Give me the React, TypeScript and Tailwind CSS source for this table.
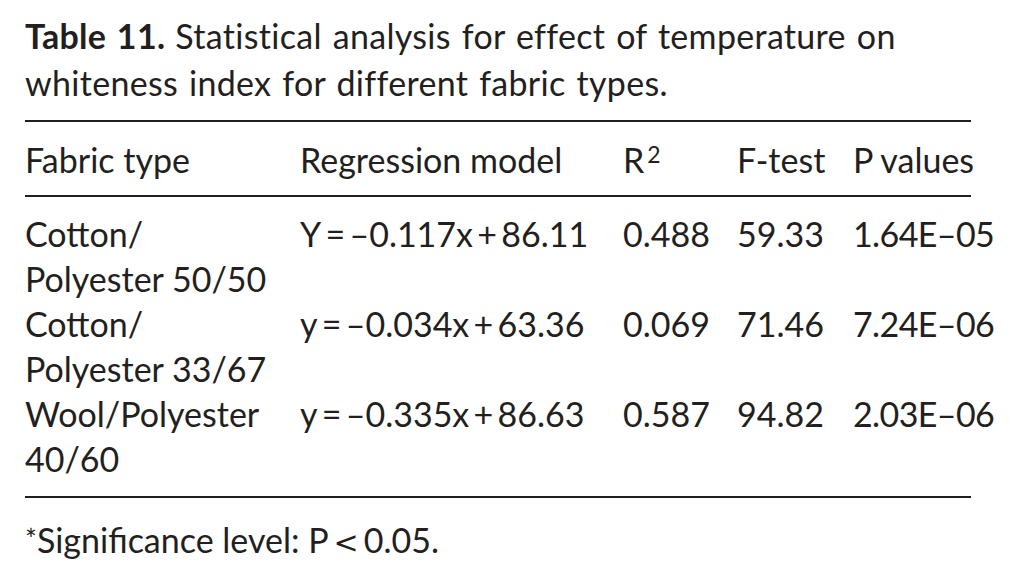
import React from 'react';

const rows = [
    {fabric: ['Cotton/', 'Polyester 50/50'], model: 'Y\u2009=\u2009\u20130.117x\u2009+\u200986.11', r2: '0.488', f: '59.33', p: '1.64E\u201305'},
    {fabric: ['Cotton/', 'Polyester 33/67'], model: 'y\u2009=\u2009\u20130.034x\u2009+\u200963.36', r2: '0.069', f: '71.46', p: '7.24E\u201306'},
    {fabric: ['Wool/Polyester', '40/60'], model: 'y\u2009=\u2009\u20130.335x\u2009+\u200986.63', r2: '0.587', f: '94.82', p: '2.03E\u201306'},
];

const cols = "grid grid-cols-[275px_323px_114px_116px_142px]";

function App() {
    return (
        <div className="w-[1021px] h-[584px] bg-white text-[#231f20] font-['Lato',sans-serif] text-[34px] overflow-hidden">
            <div className="px-[25px] pt-[12px] w-[996px]">
                <div className="leading-[47px] tracking-[0.3px] [word-spacing:2px]">
                    <div className="flex gap-[10px] whitespace-nowrap">
                        <span className="font-bold">Table 11.</span>
                        <span>Statistical analysis for effect of temperature on</span>
                    </div>
                    <div>whiteness index for different fabric types.</div>
                </div>
                <div className="mt-[14px] border-t-2 border-[#231f20]">
                    <div className={`${cols} leading-[45px] pt-[15px] pb-[13px]`}>
                        <div>Fabric type</div>
                        <div>Regression model</div>
                        <div>R<span className="text-[23px] leading-[0] relative top-[-10px] ml-[3px]">2</span></div>
                        <div>F-test</div>
                        <div>P values</div>
                    </div>
                </div>
                <div className="border-t-2 border-b-2 border-[#231f20] pt-[14px] pb-[15px] leading-[45px]">
                    {rows.map((r) => (
                        <div key={r.model} className={cols}>
                            <div>{r.fabric[0]}<br/>{r.fabric[1]}</div>
                            <div className="whitespace-nowrap">{r.model}</div>
                            <div>{r.r2}</div>
                            <div>{r.f}</div>
                            <div className="whitespace-nowrap tracking-[-0.6px]">{r.p}</div>
                        </div>
                    ))}
                </div>
                <p className="leading-[45px] pt-[19px]">
                    <span className="text-[28px] leading-[0] relative top-[-3px]">*</span>Significance level: P<span className="font-['DejaVu_Sans',sans-serif] text-[30px] leading-[0] mx-[5px]">&lt;</span>0.05.
                </p>
            </div>
        </div>
    );
}

export default App;
